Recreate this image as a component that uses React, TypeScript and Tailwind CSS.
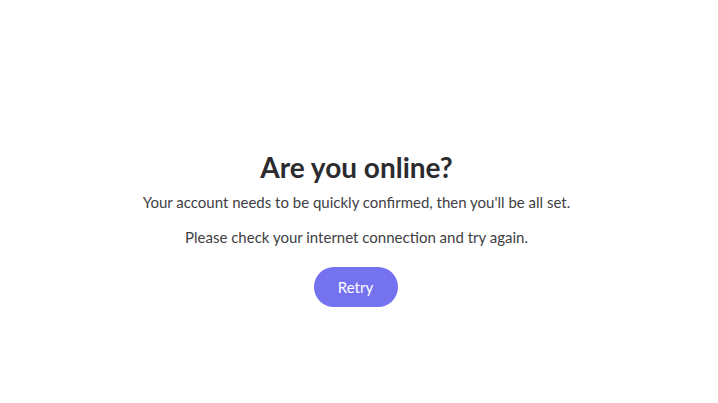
export default function App() {
  return (
    <div className="flex h-[403px] w-full flex-col items-center bg-white pt-[149px] pr-[5px] font-['Lato',sans-serif] text-center">
      <h1 className="text-[28px] leading-[36px] font-bold text-[#2b2b30]">Are you online?</h1>
      <p className="mt-[7px] text-[15px] leading-[20px] text-[#404045]">
        Your account needs to be quickly confirmed, then you'll be all set.
      </p>
      <p className="mt-[15px] text-[15px] leading-[20px] text-[#404045]">
        Please check your internet connection and try again.
      </p>
      <button className="mt-[20px] mr-[2px] h-[40px] w-[84px] rounded-full bg-[#7572f0] text-[15px] text-white">
        Retry
      </button>
    </div>
  )
}
